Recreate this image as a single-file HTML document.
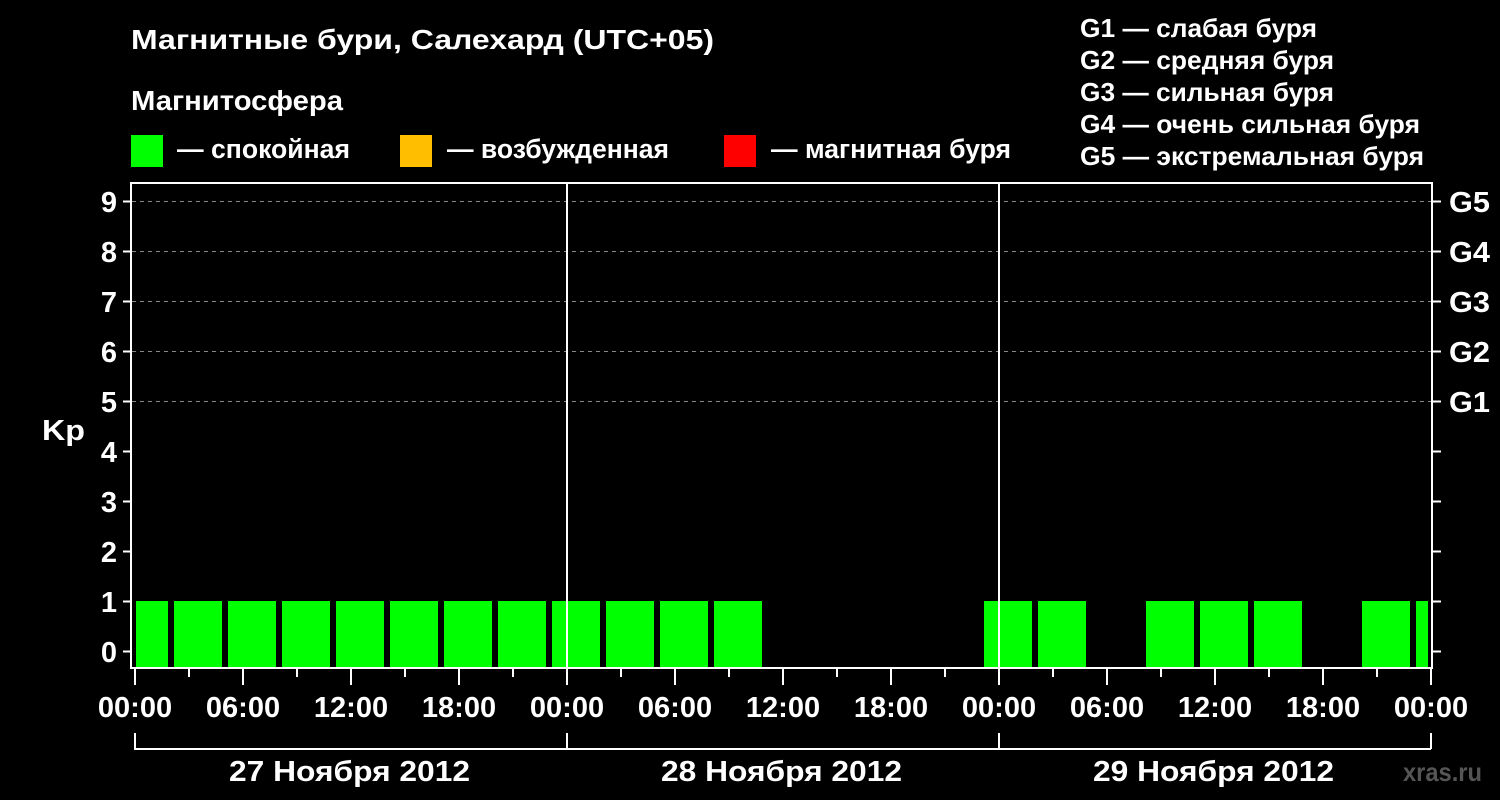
<!DOCTYPE html><html><head><meta charset="utf-8"><style>body{margin:0;background:#000}svg{display:block}text{font-family:"Liberation Sans",sans-serif;font-weight:bold;fill:#fff}</style></head><body>
<svg width="1500" height="800" xmlns="http://www.w3.org/2000/svg">
<rect width="1500" height="800" fill="#000"/>
<text x="131" y="49" font-size="28" textLength="583" lengthAdjust="spacingAndGlyphs">Магнитные бури, Салехард (UTC+05)</text>
<text x="131" y="110" font-size="28" textLength="212" lengthAdjust="spacingAndGlyphs">Магнитосфера</text>
<rect x="131" y="135" width="32" height="32" fill="#00ff00"/>
<text x="177" y="158" font-size="27" textLength="173" lengthAdjust="spacingAndGlyphs">— спокойная</text>
<rect x="400" y="135" width="32" height="32" fill="#ffbf00"/>
<text x="447" y="158" font-size="27" textLength="222" lengthAdjust="spacingAndGlyphs">— возбужденная</text>
<rect x="724" y="135" width="32" height="32" fill="#ff0000"/>
<text x="771" y="158" font-size="27" textLength="240" lengthAdjust="spacingAndGlyphs">— магнитная буря</text>
<g font-size="26">
<text x="1080" y="37" textLength="237" lengthAdjust="spacingAndGlyphs">G1 — слабая буря</text>
<text x="1080" y="69" textLength="254" lengthAdjust="spacingAndGlyphs">G2 — средняя буря</text>
<text x="1080" y="101" textLength="254" lengthAdjust="spacingAndGlyphs">G3 — сильная буря</text>
<text x="1080" y="133" textLength="340" lengthAdjust="spacingAndGlyphs">G4 — очень сильная буря</text>
<text x="1080" y="165" textLength="344" lengthAdjust="spacingAndGlyphs">G5 — экстремальная буря</text>
</g>
<g stroke="#888" stroke-dasharray="4,4" stroke-width="1">
<line x1="132" x2="1432" y1="201.5" y2="201.5"/><line x1="132" x2="1432" y1="251.5" y2="251.5"/><line x1="132" x2="1432" y1="301.5" y2="301.5"/><line x1="132" x2="1432" y1="351.5" y2="351.5"/><line x1="132" x2="1432" y1="401.5" y2="401.5"/>
</g>
<g fill="#00ff00">
<rect x="136" y="601" width="32" height="66"/>
<rect x="174" y="601" width="48" height="66"/><rect x="228" y="601" width="48" height="66"/><rect x="282" y="601" width="48" height="66"/><rect x="336" y="601" width="48" height="66"/><rect x="390" y="601" width="48" height="66"/><rect x="444" y="601" width="48" height="66"/><rect x="498" y="601" width="48" height="66"/><rect x="552" y="601" width="48" height="66"/><rect x="606" y="601" width="48" height="66"/><rect x="660" y="601" width="48" height="66"/><rect x="714" y="601" width="48" height="66"/>
<rect x="984" y="601" width="48" height="66"/><rect x="1038" y="601" width="48" height="66"/><rect x="1146" y="601" width="48" height="66"/><rect x="1200" y="601" width="48" height="66"/><rect x="1254" y="601" width="48" height="66"/><rect x="1362" y="601" width="48" height="66"/><rect x="1416" y="601" width="12" height="66"/>
</g>
<g stroke="#fff" stroke-width="2" fill="none">
<rect x="131" y="183" width="1301" height="485"/>
<line x1="567" y1="183" x2="567" y2="668"/><line x1="999" y1="183" x2="999" y2="668"/>
<path d="M123 201.5h8M123 251.5h8M123 301.5h8M123 351.5h8M123 401.5h8M123 451.5h8M123 501.5h8M123 551.5h8M123 601.5h8M123 651.5h8"/>
<path d="M1432 201.5h9M1432 251.5h9M1432 301.5h9M1432 351.5h9M1432 401.5h9M1432 451.5h9M1432 501.5h9M1432 551.5h9M1432 601.5h9M1432 651.5h9"/>
<path d="M135 668v17M189 668v9M243 668v17M297 668v9M351 668v17M405 668v9M459 668v17M513 668v9M567 668v17M621 668v9M675 668v17M729 668v9M783 668v17M837 668v9M891 668v17M945 668v9M999 668v17M1053 668v9M1107 668v17M1161 668v9M1215 668v17M1269 668v9M1323 668v17M1377 668v9M1431 668v17"/>
<path d="M135 733v16H1431M567 733v16M999 733v16M1431 733v16"/>
</g>
<g font-size="29" text-anchor="end">
<text x="117" y="212">9</text><text x="117" y="262">8</text><text x="117" y="312">7</text><text x="117" y="362">6</text><text x="117" y="412">5</text><text x="117" y="462">4</text><text x="117" y="512">3</text><text x="117" y="562">2</text><text x="117" y="612">1</text><text x="117" y="662">0</text>
</g>
<text x="42" y="440" font-size="29" textLength="43" lengthAdjust="spacingAndGlyphs">Kp</text>
<g font-size="29">
<text x="1449" y="212" textLength="41" lengthAdjust="spacingAndGlyphs">G5</text><text x="1449" y="262" textLength="41" lengthAdjust="spacingAndGlyphs">G4</text><text x="1449" y="312" textLength="41" lengthAdjust="spacingAndGlyphs">G3</text><text x="1449" y="362" textLength="41" lengthAdjust="spacingAndGlyphs">G2</text><text x="1449" y="412" textLength="41" lengthAdjust="spacingAndGlyphs">G1</text>
</g>
<g font-size="29" text-anchor="middle">
<text x="135" y="717">00:00</text><text x="243" y="717">06:00</text><text x="351" y="717">12:00</text><text x="459" y="717">18:00</text><text x="567" y="717">00:00</text><text x="675" y="717">06:00</text><text x="783" y="717">12:00</text><text x="891" y="717">18:00</text><text x="999" y="717">00:00</text><text x="1107" y="717">06:00</text><text x="1215" y="717">12:00</text><text x="1323" y="717">18:00</text><text x="1431" y="717">00:00</text>
</g>
<g font-size="29">
<text x="229" y="781" textLength="241" lengthAdjust="spacingAndGlyphs">27 Ноября 2012</text><text x="661" y="781" textLength="241" lengthAdjust="spacingAndGlyphs">28 Ноября 2012</text><text x="1093" y="781" textLength="241" lengthAdjust="spacingAndGlyphs">29 Ноября 2012</text>
</g>
<text x="1403" y="781" font-size="26" textLength="79" lengthAdjust="spacingAndGlyphs" style="fill:#555">xras.ru</text>
</svg></body></html>
